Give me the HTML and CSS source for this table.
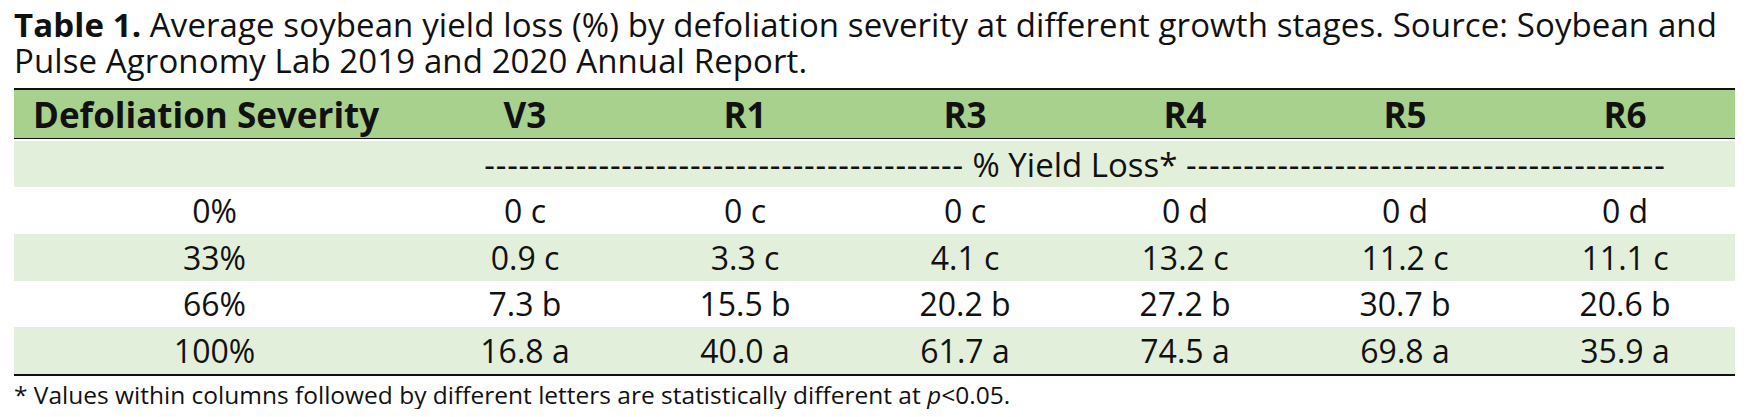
FILE: index.html
```html
<!DOCTYPE html>
<html lang="en">
<head>
<meta charset="utf-8">
<title>Table 1</title>
<link rel="stylesheet" href="styles.css">
</head>
<body>
<div class="page">
  <p class="caption"><b>Table 1.</b> Average soybean yield loss (%) by defoliation severity at different growth stages. Source: Soybean and<br>Pulse Agronomy Lab 2019 and 2020 Annual Report.</p>
  <div class="table">
    <div class="row head">
      <div class="cell label">Defoliation Severity</div>
      <div class="cell">V3</div>
      <div class="cell">R1</div>
      <div class="cell">R3</div>
      <div class="cell">R4</div>
      <div class="cell">R5</div>
      <div class="cell">R6</div>
    </div>
    <div class="row sub">
      <div class="cell"></div>
      <div class="span"><span class="dash">------------------------------------------</span> % Yield Loss* <span class="dash">------------------------------------------</span></div>
    </div>
    <div class="row">
      <div class="cell">0%</div>
      <div class="cell">0 c</div>
      <div class="cell">0 c</div>
      <div class="cell">0 c</div>
      <div class="cell">0 d</div>
      <div class="cell">0 d</div>
      <div class="cell">0 d</div>
    </div>
    <div class="row alt">
      <div class="cell">33%</div>
      <div class="cell">0.9 c</div>
      <div class="cell">3.3 c</div>
      <div class="cell">4.1 c</div>
      <div class="cell">13.2 c</div>
      <div class="cell">11.2 c</div>
      <div class="cell">11.1 c</div>
    </div>
    <div class="row">
      <div class="cell">66%</div>
      <div class="cell">7.3 b</div>
      <div class="cell">15.5 b</div>
      <div class="cell">20.2 b</div>
      <div class="cell">27.2 b</div>
      <div class="cell">30.7 b</div>
      <div class="cell">20.6 b</div>
    </div>
    <div class="row alt last">
      <div class="cell">100%</div>
      <div class="cell">16.8 a</div>
      <div class="cell">40.0 a</div>
      <div class="cell">61.7 a</div>
      <div class="cell">74.5 a</div>
      <div class="cell">69.8 a</div>
      <div class="cell">35.9 a</div>
    </div>
  </div>
  <p class="note">* Values within columns followed by different letters are statistically different at <i>p</i>&lt;0.05.</p>
</div>
</body>
</html>
```

FILE: styles.css
```css
html, body {
  margin: 0;
  padding: 0;
  background: #ffffff;
}

body {
  font-family: "Open Sans", "Noto Sans", sans-serif;
  color: #111111;
}

.page {
  padding: 0 14px;
  width: 1721px;
}

.caption {
  margin: 0;
  padding-top: 7px;
  font-size: 33px;
  line-height: 36px;
  letter-spacing: 0.1px;
  white-space: nowrap;
}

.caption b {
  font-weight: 700;
}

.table {
  margin-top: 9px;
  border-top: 2px solid #111111;
  border-bottom: 2px solid #111111;
}

.row {
  display: grid;
  grid-template-columns: 401px repeat(6, 220px);
  height: 46.75px;
  align-items: center;
  font-size: 32px;
}

.row.alt,
.row.sub {
  background: #e2efda;
}

.row.head {
  height: 48px;
  background: #a9d18e;
  font-weight: 700;
  font-size: 35px;
  border-bottom: 1px solid #111111;
  margin-bottom: 2px;
}

.row.sub {
  height: 46px;
  font-size: 33px;
}

.cell {
  text-align: center;
  white-space: nowrap;
}

.cell.label {
  text-align: left;
  padding-left: 19px;
}

.span {
  grid-column: 2 / -1;
  text-align: center;
  white-space: nowrap;
}

.dash {
  letter-spacing: 0.8px;
}

.note {
  margin: 5px 0 0;
  font-size: 24.5px;
  line-height: 28px;
}
```
